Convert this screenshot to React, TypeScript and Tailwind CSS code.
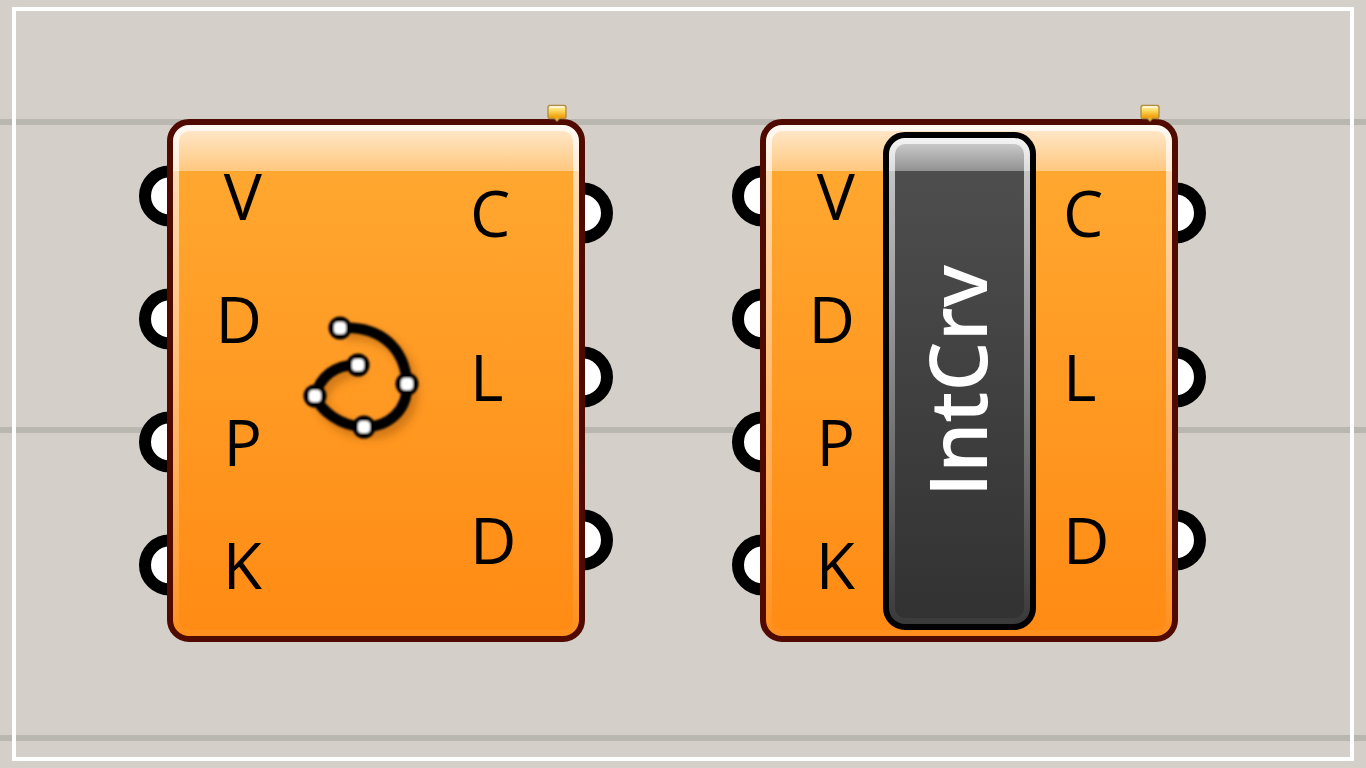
import type { ReactNode } from 'react'

const INPUTS = ['V', 'D', 'P', 'K']
const OUTPUTS = ['C', 'L', 'D']

function Port({ side }: { side: 'left' | 'right' }) {
  return (
    <span
      className={`absolute top-1/2 -z-10 size-[61px] -translate-y-1/2 rounded-full border-12 border-black bg-white ${
        side === 'left' ? '-left-[40px]' : '-right-[40px]'
      }`}
    />
  )
}

function WarningTag() {
  return (
    <svg viewBox="0 0 20 18" className="absolute -top-[21px] left-[374px] h-[18px] w-5">
      <defs>
        <linearGradient id="tag" x1="0" y1="0" x2="0" y2="1">
          <stop offset="0" stopColor="#fff3b8" />
          <stop offset="0.35" stopColor="#fbd658" />
          <stop offset="0.75" stopColor="#f0a008" />
          <stop offset="1" stopColor="#ffd75a" />
        </linearGradient>
      </defs>
      <path
        d="M2.5 1.5h15a1.5 1.5 0 0 1 1.5 1.5v10a1.5 1.5 0 0 1-1.5 1.5h-5l-2.5 2.5l-2.5-2.5h-5a1.5 1.5 0 0 1-1.5-1.5v-10a1.5 1.5 0 0 1 1.5-1.5z"
        fill="url(#tag)"
        stroke="#b08c40"
        strokeWidth="1.3"
      />
      <path d="M3 3h14" stroke="#fffbe6" strokeWidth="1.5" />
    </svg>
  )
}

const CURVE = 'M48 23C87 20 113 42 115 79C116 105 97 122 72 122C48 121 29 106 23 91C28 72 43 59 66 60'

const KNOTS = [
  [48, 23],
  [66, 60],
  [115, 79],
  [23, 91],
  [72, 122],
]

function CurveIcon() {
  return (
    <svg viewBox="-1 1 150 150" className="size-[150px] shrink-0">
      <defs>
        <filter id="soft" x="-20%" y="-20%" width="140%" height="140%">
          <feGaussianBlur stdDeviation="1.3" />
        </filter>
        <filter id="shade" x="-20%" y="-20%" width="150%" height="150%">
          <feGaussianBlur stdDeviation="4" />
        </filter>
      </defs>
      <path
        d={CURVE}
        transform="translate(5 6)"
        fill="none"
        stroke="#7a3c00"
        strokeOpacity="0.35"
        strokeWidth="12"
        filter="url(#shade)"
      />
      <g filter="url(#soft)">
        <path d={CURVE} fill="none" stroke="#000" strokeWidth="10.5" />
        {KNOTS.map(([x, y]) => (
          <g key={`${x}-${y}`}>
            <circle cx={x} cy={y} r="11.5" fill="#000" />
            <rect x={x - 6} y={y - 6} width="12" height="12" rx="4" fill="#fff" />
          </g>
        ))}
      </g>
    </svg>
  )
}

function NameBar({ name }: { name: string }) {
  return (
    <div className="flex h-full w-[153px] rounded-[22px] border-6 border-black bg-[linear-gradient(#f4f4f4,#dcdcdc_33px,#c4c4c4_33px,#3a3a3a)] p-[6px]">
      <div className="flex flex-1 items-center justify-center rounded-[10px] bg-[linear-gradient(#c8c8c8,#929292_27px,#4e4e4e_27px,#323232)] pr-1.5">
        <span className="rotate-180 text-[79px] leading-none font-semibold text-white [writing-mode:vertical-rl]">{name}</span>
      </div>
    </div>
  )
}

function Component({ className, children }: { className: string; children: ReactNode }) {
  return (
    <section className={`absolute isolate h-[523px] w-[418px] ${className}`}>
      <div className="relative h-full rounded-[22px] border-6 border-[#500a00] bg-[linear-gradient(#fffaf4,#ffecd4_46px,#ffdcb0_46px,#ff9c38_88%,#ff8f1c)] p-[6px]">
        <WarningTag />
        <div className="flex h-full rounded-[10px] bg-[linear-gradient(#ffe6c6,#ffc880_40px,#ffa730_40px,#ff8b14)] text-[64px] leading-none">
          <ul className="flex w-[83px] flex-col py-[3px] text-right">
            {INPUTS.map((label) => (
              <li key={label} className="relative flex flex-1 items-center justify-end">
                <Port side="left" />
                {label}
              </li>
            ))}
          </ul>
          <div className="flex flex-1 items-center justify-center pt-px">{children}</div>
          <ul className="flex w-[103px] flex-col pb-2">
            {OUTPUTS.map((label) => (
              <li key={label} className="relative flex flex-1 items-center">
                {label}
                <Port side="right" />
              </li>
            ))}
          </ul>
        </div>
      </div>
    </section>
  )
}

export default function App() {
  return (
    <main className="relative min-h-screen overflow-hidden bg-[#d4cfc8] bg-[linear-gradient(#bab7b0_6px,transparent_6px)] [background-position:0_119px] [background-size:100%_308px] font-['Open_Sans','Noto_Sans',sans-serif] text-black">
      <div className="absolute inset-x-3 inset-y-[7px] border-4 border-white" />
      <Component className="top-[119px] left-[167px]">
        <CurveIcon />
      </Component>
      <Component className="top-[119px] left-[760px]">
        <NameBar name="IntCrv" />
      </Component>
    </main>
  )
}
